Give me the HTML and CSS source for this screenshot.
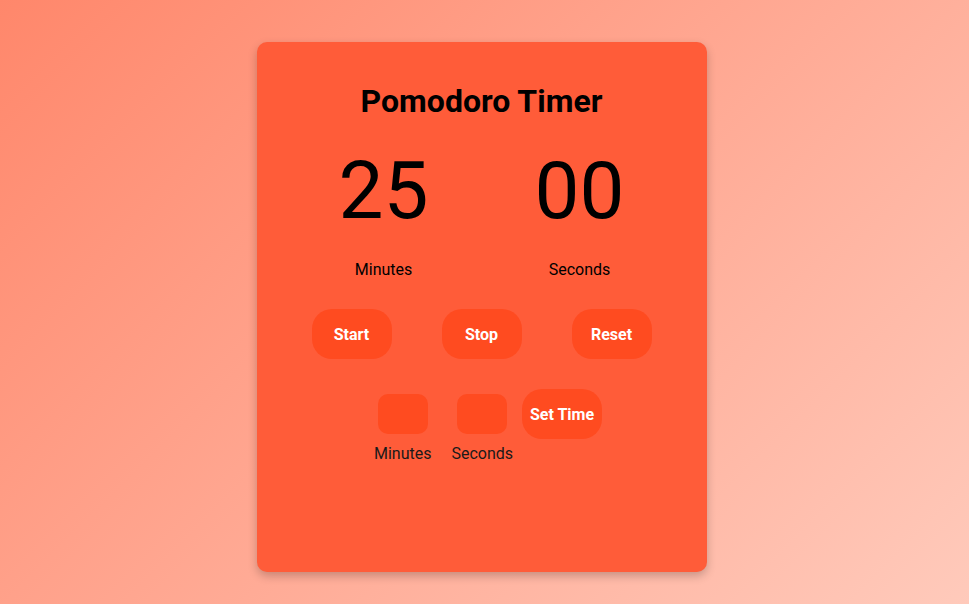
FILE: index.html
```html
<!DOCTYPE html>
<html lang="en">
<head>
<meta charset="UTF-8">
<title>Pomodoro Timer</title>
<link rel="stylesheet" href="styles.css">
</head>
<body>
<div class="card">
  <h1 class="title">Pomodoro Timer</h1>
  <div class="clock">
    <div class="unit">
      <div class="digits">25</div>
      <div class="unit-label">Minutes</div>
    </div>
    <div class="unit">
      <div class="digits">00</div>
      <div class="unit-label">Seconds</div>
    </div>
  </div>
  <div class="controls">
    <button class="btn">Start</button>
    <button class="btn">Stop</button>
    <button class="btn">Reset</button>
  </div>
  <div class="setter">
    <div class="field field-min">
      <input class="field-input" type="text">
      <span class="field-label">Minutes</span>
    </div>
    <div class="field field-sec">
      <input class="field-input" type="text">
      <span class="field-label">Seconds</span>
    </div>
    <button class="btn">Set Time</button>
  </div>
</div>
</body>
</html>
```
FILE: styles.css
```css
html, body {
  height: 100%;
}
body {
  margin: 0;
  font-family: Roboto, "Liberation Sans", sans-serif;
  background: linear-gradient(135deg, #ff876b 0%, #ffcabb 100%);
  display: flex;
  justify-content: center;
  align-items: flex-start;
}
.card {
  margin-top: 42px;
  margin-right: 6px;
  width: 450px;
  height: 530px;
  box-sizing: border-box;
  background: #ff5c39;
  border-radius: 10px;
  box-shadow: 0 4px 10px rgba(0, 0, 0, 0.22);
  display: flex;
  flex-direction: column;
  align-items: center;
}
.title {
  margin: 40px 0 0;
  font-size: 32px;
  font-weight: 700;
  line-height: 38px;
  color: #000;
}
.clock {
  margin-top: 24px;
  display: flex;
  gap: 106px;
}
.unit {
  display: flex;
  flex-direction: column;
  align-items: center;
}
.digits {
  font-size: 80px;
  line-height: 94px;
  font-weight: 400;
  color: #000;
}
.unit-label {
  margin-top: 22px;
  font-size: 16px;
  line-height: 19px;
  color: #000;
}
.controls {
  margin-top: 30px;
  display: flex;
  gap: 50px;
}
.btn {
  width: 80px;
  height: 50px;
  border: none;
  border-radius: 20px;
  background: #ff4b20;
  color: #fff;
  font-family: Roboto, "Liberation Sans", sans-serif;
  font-size: 16px;
  font-weight: 700;
  padding: 0;
}
.setter {
  margin-top: 30px;
  display: flex;
  align-items: flex-start;
  padding-left: 13px;
}
.field {
  display: flex;
  flex-direction: column;
  align-items: center;
  padding-top: 5px;
}
.field-min {
  margin-right: 20px;
}
.field-sec {
  margin-right: 9px;
}
.field-input {
  width: 50px;
  height: 40px;
  box-sizing: border-box;
  border: none;
  border-radius: 10px;
  background: #ff4b20;
  outline: none;
  padding: 0;
}
.field-label {
  margin-top: 10px;
  font-size: 16px;
  line-height: 19px;
  color: #1a1a1a;
}
```
